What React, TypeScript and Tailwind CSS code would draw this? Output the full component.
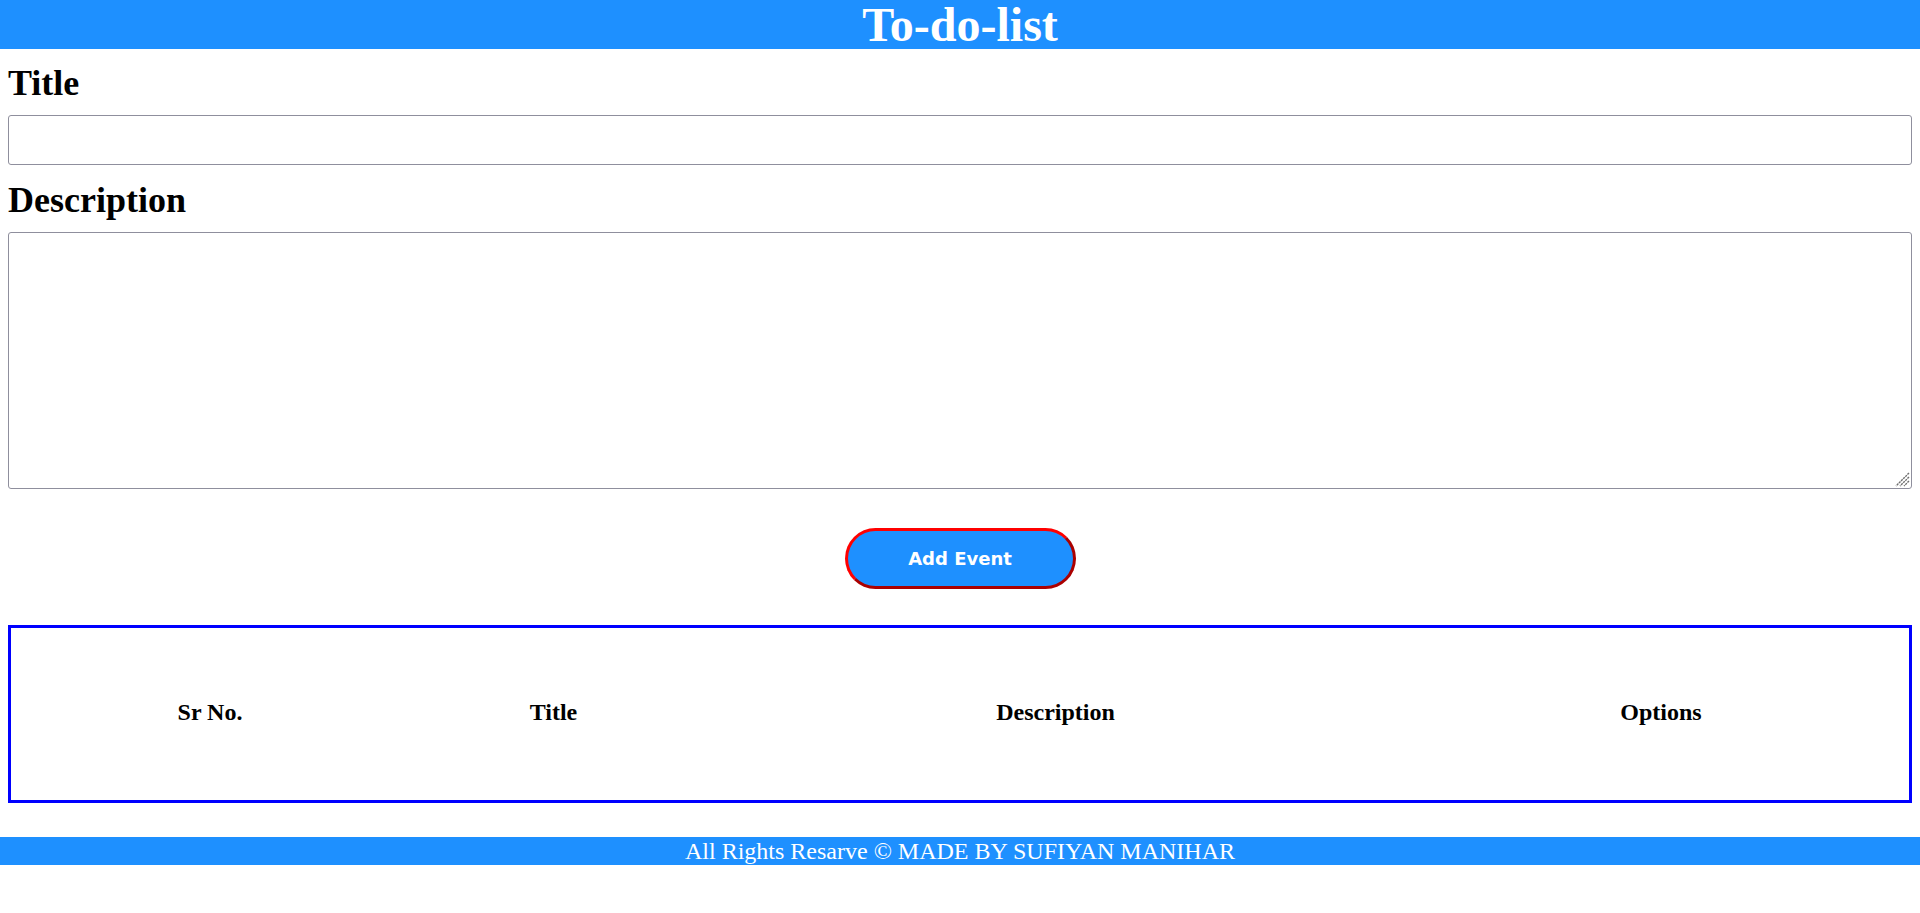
import { useState } from 'react';

type Todo = {
  sno: number;
  title: string;
  desc: string;
};

export default function App() {
  const [title, setTitle] = useState('');
  const [desc, setDesc] = useState('');
  const [todos, setTodos] = useState<Todo[]>([]);

  const addTodo = () => {
    if (!title.trim()) return;
    setTodos([...todos, { sno: todos.length + 1, title, desc }]);
    setTitle('');
    setDesc('');
  };

  return (
    <div className="min-h-[913px] bg-white font-['Liberation_Serif','Times_New_Roman',serif] text-black">
      {/* Header */}
      <header className="h-[49px] bg-[#1e90ff] text-center">
        <h1 className="text-[48px] font-bold leading-[49px] text-white">To-do-list</h1>
      </header>

      <main className="px-2">
        {/* Form */}
        <h2 className="mt-[15px] mb-[12px] text-[36px] font-bold leading-[39px]">Title</h2>
        <input
          type="text"
          value={title}
          onChange={e => setTitle(e.target.value)}
          className="block h-[50px] w-full rounded-[3px] border border-[#8f8f9d] bg-white px-2 text-base outline-none"
        />

        <h2 className="mt-[16px] mb-[12px] text-[36px] font-bold leading-[39px]">Description</h2>
        <div className="relative">
          <textarea
            value={desc}
            onChange={e => setDesc(e.target.value)}
            className="block h-[257px] w-full resize-none rounded-[3px] border border-[#8f8f9d] bg-white p-2 text-base outline-none"
          />
          {/* resize grip */}
          <svg className="pointer-events-none absolute right-[2px] bottom-[2px]" width="16" height="16" viewBox="0 0 16 16">
            <g stroke="#6f6f6f" strokeWidth="1.4" strokeDasharray="2.2 0.8">
              <line x1="15" y1="2" x2="2" y2="15" />
              <line x1="15" y1="6" x2="6" y2="15" />
              <line x1="15" y1="10" x2="10" y2="15" />
            </g>
          </svg>
        </div>

        <div className="mt-[39px] flex justify-center">
          <button
            onClick={addTodo}
            className="flex h-[61px] w-[231px] items-center justify-center rounded-full border-[3px] border-[#ff0000] [border-style:outset] bg-[#1e90ff] font-['DejaVu_Sans',Verdana,sans-serif] text-[18px] font-bold text-white"
          >
            Add Event
          </button>
        </div>

        {/* Table */}
        <div className="mt-[36px] border-[3px] border-[#0000ff]">
          <div className="grid h-[172px] grid-cols-[398px_289px_715px_1fr] items-center pb-[4px] text-center text-[24px] font-bold">
            <div>Sr No.</div>
            <div>Title</div>
            <div>Description</div>
            <div>Options</div>
          </div>
          {todos.map(t => (
            <div key={t.sno} className="grid grid-cols-[398px_289px_715px_1fr] py-2 text-center text-[20px]">
              <div>{t.sno}</div>
              <div>{t.title}</div>
              <div>{t.desc}</div>
              <div>
                <button
                  onClick={() => setTodos(todos.filter(x => x.sno !== t.sno))}
                  className="rounded bg-red-600 px-3 py-1 text-base text-white"
                >
                  Delete
                </button>
              </div>
            </div>
          ))}
        </div>
      </main>

      {/* Footer */}
      <footer className="mt-[34px] h-[28px] bg-[#1e90ff] text-center text-[24px] leading-[28px] text-white">
        All Rights Resarve © MADE BY SUFIYAN MANIHAR
      </footer>
    </div>
  );
}
